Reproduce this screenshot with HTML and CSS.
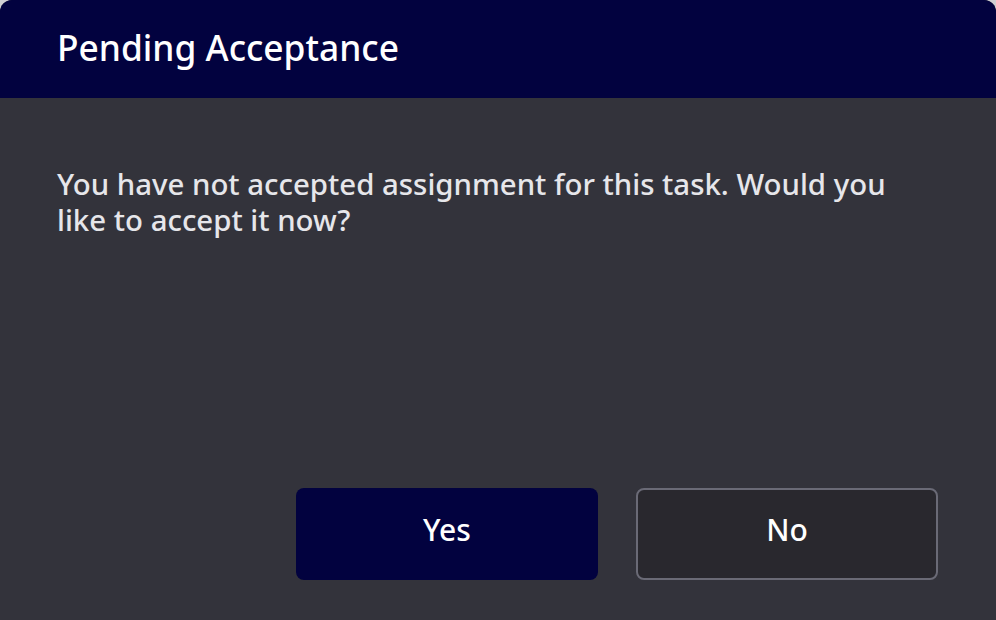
FILE: index.html
```html
<!DOCTYPE html>
<html lang="en">
<head>
<meta charset="utf-8">
<title>Pending Acceptance</title>
<link rel="stylesheet" href="styles.css">
</head>
<body>
<div class="dialog">
  <div class="dialog-header">
    <h1 class="dialog-title">Pending Acceptance</h1>
  </div>
  <div class="dialog-body">
    <p class="dialog-message">You have not accepted assignment for this task. Would you like to accept it now?</p>
    <div class="dialog-actions">
      <button class="btn btn-primary">Yes</button>
      <button class="btn btn-secondary">No</button>
    </div>
  </div>
</div>
</body>
</html>
```

FILE: styles.css
```css
* { box-sizing: border-box; }
html, body {
  margin: 0;
  padding: 0;
  width: 996px;
  height: 620px;
  background: #cfcfd3;
  font-family: "Noto Sans", "Open Sans", sans-serif;
  overflow: hidden;
}
.dialog {
  width: 996px;
  height: 620px;
  background: #33333b;
  border-radius: 12px 12px 0 0;
  overflow: hidden;
  display: flex;
  flex-direction: column;
}
.dialog-header {
  height: 98px;
  background: #02023f;
  display: flex;
  align-items: center;
  padding: 0 57px;
  flex: none;
}
.dialog-title {
  margin: 0;
  color: #ffffff;
  font-size: 35.3px;
  font-weight: 500;
  line-height: 1;
  position: relative;
  top: -1px;
}
.dialog-body {
  flex: 1;
  display: flex;
  flex-direction: column;
  padding: 68px 58px 40px 57px;
}
.dialog-message {
  margin: 0;
  color: #e6e6ea;
  font-size: 29.4px;
  font-weight: 500;
  line-height: 36px;
  flex: 1;
}
.dialog-actions {
  display: flex;
  justify-content: flex-end;
  gap: 38px;
}
.btn {
  width: 302px;
  height: 92px;
  border-radius: 8px;
  font-family: inherit;
  font-size: 30px;
  font-weight: 500;
  color: #ffffff;
  cursor: pointer;
  padding: 0 0 10px 0;
}
.btn-primary {
  background: #02023f;
  border: none;
}
.btn-secondary {
  background: #29282e;
  border: 2px solid #6a6a76;
}
```
